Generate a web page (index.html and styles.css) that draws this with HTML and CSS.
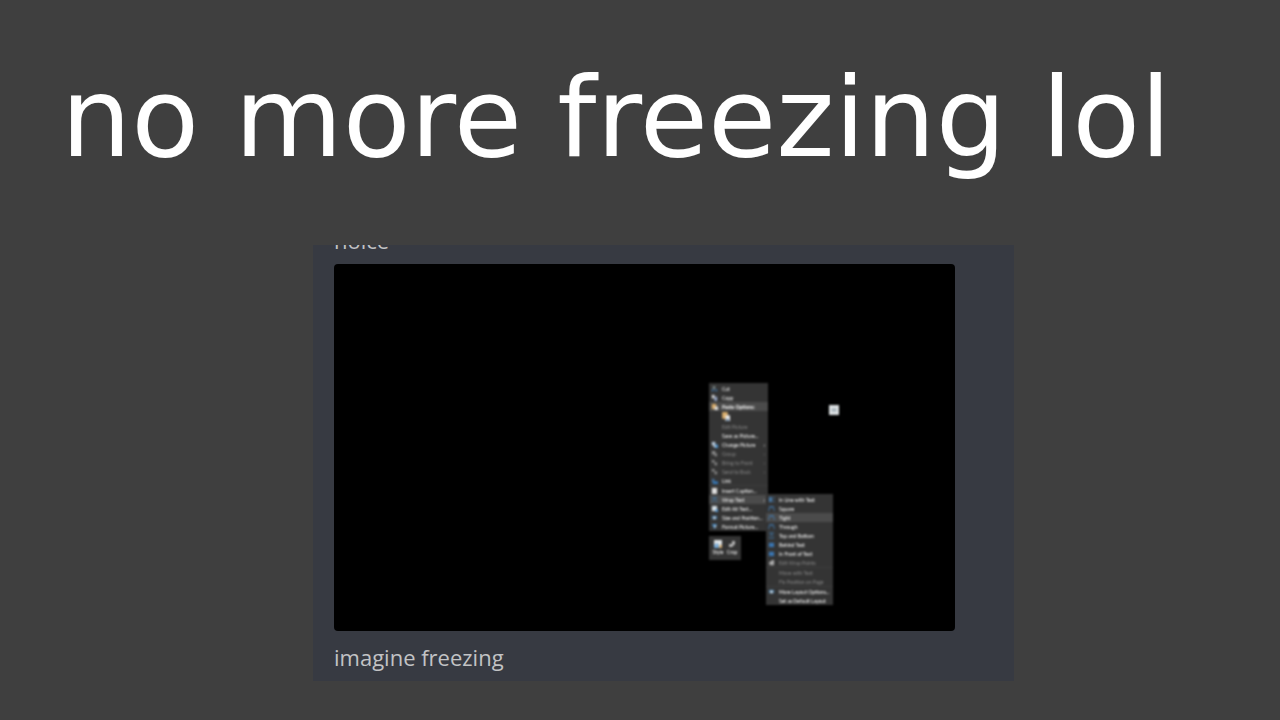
FILE: index.html
```html
<!DOCTYPE html>
<html lang="en">
<head>
<meta charset="utf-8">
<title>no more freezing lol</title>
<link rel="stylesheet" href="styles.css">
</head>
<body>
<h1 class="title">no more freezing lol</h1>
<figure class="chat">
  <p class="message message-cut">noice</p>
  <div class="shot">
    <ul class="menu menu-main">
      <li><button class="item"><svg class="ico" viewBox="0 0 8 8"><path d="M2 1l3 4M5 1L2 5" stroke="#9aa"/><path d="M1 6h2M5 6h2" stroke="#3977b5" stroke-width="2"/></svg>Cut</button></li>
      <li><button class="item"><svg class="ico" viewBox="0 0 8 8"><path d="M1 1h3v4H1z" fill="#ddd"/><path d="M4 3h3v5H4z" fill="#9ac"/></svg>Copy</button></li>
      <li><button class="item item-active item-bold"><svg class="ico" viewBox="0 0 8 8"><path d="M1 1h5v6H1z" fill="#d6a865"/><path d="M4 4h4v4H4z" fill="#ddd"/></svg>Paste Options:</button></li>
      <li class="paste-row"><button class="paste" aria-label="Paste picture"><svg class="paste-ico" viewBox="0 0 8 8"><path d="M1 0h5v6H1z" fill="#d9ad6b"/><path d="M4 3h4v5H4z" fill="#eee"/><path d="M5 6h2v2H5z" fill="#579"/></svg></button></li>
      <li><button class="item item-off"><span class="ico"></span>Edit Picture</button></li>
      <li><button class="item"><span class="ico"></span>Save as Picture...</button></li>
      <li><button class="item"><svg class="ico" viewBox="0 0 8 8"><path d="M1 1h4v4H1z" fill="#bcd"/><path d="M4 4h4v4H4z" fill="#4f91c9"/><path d="M3 5h2v2H3z" fill="#eee"/></svg>Change Picture<span class="arrow">›</span></button></li>
      <li><button class="item item-off"><svg class="ico" viewBox="0 0 8 8"><path d="M1 1h4v4H1zM4 4h3v3H4z" fill="#888"/></svg>Group<span class="arrow">›</span></button></li>
      <li><button class="item item-off"><svg class="ico" viewBox="0 0 8 8"><path d="M1 1h3v3H1zM4 4h3v3H4z" fill="#888"/></svg>Bring to Front<span class="arrow">›</span></button></li>
      <li><button class="item item-off"><svg class="ico" viewBox="0 0 8 8"><path d="M1 1h3v3H1zM4 4h3v3H4z" fill="#888"/></svg>Send to Back<span class="arrow">›</span></button></li>
      <li><button class="item"><svg class="ico" viewBox="0 0 8 8"><path d="M1 2h3v4H1z" fill="#456b91"/><path d="M2 5h6v3H2z" fill="#3578b8"/></svg>Link</button></li>
      <li class="rule"><button class="item"><svg class="ico" viewBox="0 0 8 8"><path d="M1 1h6v7H1z" fill="#ddd"/></svg>Insert Caption...</button></li>
      <li><button class="item item-active"><svg class="ico" viewBox="0 0 8 8"><path d="M1 2h6M1 6h2M5 6h2M2 5l2-2 2 2" stroke="#3e78ac" fill="none"/></svg>Wrap Text<span class="arrow">›</span></button></li>
      <li><button class="item"><svg class="ico" viewBox="0 0 8 8"><path d="M1 1h6v6H1z" fill="#d5dde3"/><path d="M5 5h3v3H5z" fill="#5597d1"/></svg>Edit Alt Text...</button></li>
      <li><button class="item"><svg class="ico" viewBox="0 0 8 8"><path d="M1 2h6v4H1z" fill="#47759c"/><path d="M3 3h2v3H3z" fill="#eee"/></svg>Size and Position...</button></li>
      <li><button class="item"><svg class="ico" viewBox="0 0 8 8"><path d="M1 1h6L4 7z" fill="#4c8cc3"/><path d="M4 3h2v2H4z" fill="#ddd"/></svg>Format Picture...</button></li>
    </ul>
    <ul class="menu menu-wrap">
      <li><button class="item"><svg class="ico" viewBox="0 0 8 8"><path d="M1 1h4v6H1z" fill="#4775a0"/><path d="M6 2h2M6 6h2" stroke="#4775a0"/></svg>In Line with Text</button></li>
      <li><button class="item"><svg class="ico" viewBox="0 0 8 8"><path d="M1 7V4l3-2 3 2v3M1 2h6" stroke="#4279ad" fill="none"/></svg>Square</button></li>
      <li><button class="item item-active"><svg class="ico" viewBox="0 0 8 8"><path d="M1 7V4l3-2 3 2v3M1 2h6" stroke="#4279ad" fill="none"/></svg>Tight</button></li>
      <li><button class="item"><svg class="ico" viewBox="0 0 8 8"><path d="M1 7V4l3-2 3 2v3M1 2h6" stroke="#4279ad" fill="none"/></svg>Through</button></li>
      <li><button class="item"><svg class="ico" viewBox="0 0 8 8"><path d="M1 7h6M2 5l2-3 2 3M1 1h6" stroke="#4279ad" fill="none"/></svg>Top and Bottom</button></li>
      <li><button class="item"><svg class="ico" viewBox="0 0 8 8"><path d="M1 2h6v5H1z" fill="#3975b0"/></svg>Behind Text</button></li>
      <li><button class="item"><svg class="ico" viewBox="0 0 8 8"><path d="M1 2h6v5H1z" fill="#3975b0"/></svg>In Front of Text</button></li>
      <li><button class="item item-off"><svg class="ico" viewBox="0 0 8 8"><path d="M1 4l4-3h2v6H2z" fill="#aaa"/></svg>Edit Wrap Points</button></li>
      <li class="rule"><button class="item item-off"><span class="ico"></span>Move with Text</button></li>
      <li><button class="item item-off"><span class="ico"></span>Fix Position on Page</button></li>
      <li class="rule"><button class="item"><svg class="ico" viewBox="0 0 8 8"><path d="M1 2h6v4H1z" fill="#4d799d"/><path d="M3 3h2v3H3z" fill="#fff"/></svg>More Layout Options...</button></li>
      <li><button class="item"><span class="ico"></span>Set as Default Layout</button></li>
    </ul>
    <div class="tools">
      <button class="tool"><svg class="tool-ico" viewBox="0 0 8 8"><path d="M0 0h8v8H0z" fill="#dfe3e5"/><path d="M0 5l3-2 2 2v3H0z" fill="#78a9d4"/><path d="M5 5h3v3H5z" fill="#d2ac74"/></svg>Style</button>
      <button class="tool"><svg class="tool-ico" viewBox="0 0 8 8"><path d="M1 7V4h3V1h3v3L4 7z" fill="#b5b5b5"/></svg>Crop</button>
    </div>
    <button class="layout-options" aria-label="Layout options"><svg viewBox="0 0 11 11"><path d="M0 0h11v11H0z" fill="#dce0e2"/><path d="M3 4h5v3H3z" fill="#9eabb3"/></svg></button>
  </div>
  <figcaption class="message">imagine freezing</figcaption>
</figure>
</body>
</html>
```
FILE: styles.css
```css
* { box-sizing: border-box; }
body {
  margin: 0;
  min-height: 100vh;
  padding: 54px 0 39px;
  background: #3f3f3f;
  font-family: "Open Sans", "Noto Sans", sans-serif;
}
.title {
  margin: 0 0 63px 61px;
  color: #fff;
  font: 400 111px/128px "DejaVu Sans", sans-serif;
  white-space: nowrap;
}
.chat {
  margin: 0 266px 0 313px;
  padding: 0 59px 8px 21px;
  background: #373a42;
}
.message {
  color: #c2c3c5;
  font-size: 22px;
  line-height: 32px;
  padding-top: 10px;
  white-space: nowrap;
}
.message-cut {
  display: flex;
  align-items: flex-end;
  height: 4px;
  margin: 0 0 15px;
  padding: 0;
  line-height: 18px;
  overflow: hidden;
}
.shot {
  position: relative;
  aspect-ratio: 621 / 367;
  border-radius: 4px;
  background: #000;
}
.menu, .tools {
  position: absolute;
  background: #343434;
  filter: blur(1px);
}
.menu { margin: 0; padding: 1px 0 0; list-style: none; }
.menu-main { left: 375px; top: 119px; width: 59px; }
.menu-wrap { left: 432px; top: 230px; width: 67px; }
button {
  border: 0;
  padding: 0;
  background: none;
  color: #fff;
  font: 5px/8px "Lato", sans-serif;
}
.item {
  display: flex;
  align-items: center;
  gap: 4px;
  width: 100%;
  height: 9px;
  padding: 0 3px 0 2px;
  text-align: left;
  white-space: nowrap;
}
.item-active { background: #4b4b4b; }
.item-bold { font-weight: 700; }
.item-off { color: #888; }
.ico { width: 7px; height: 7px; flex: none; }
.arrow { margin-left: auto; }
.rule { border-top: 1px solid #3c3c3c; }
.paste-row { height: 11px; padding: 1px 0 0 12px; }
.paste { display: block; }
.paste-ico { display: block; width: 9px; height: 9px; }
.tools {
  left: 375px;
  top: 272px;
  display: flex;
  gap: 4px;
  width: 32px;
  height: 24px;
  padding: 4px;
}
.tool { display: flex; flex-direction: column; align-items: center; width: 10px; }
.tool-ico { width: 8px; height: 8px; }
.layout-options {
  position: absolute;
  left: 495px;
  top: 141px;
  width: 10px;
  height: 10px;
  filter: blur(1px);
}
.layout-options svg { display: block; }
```
